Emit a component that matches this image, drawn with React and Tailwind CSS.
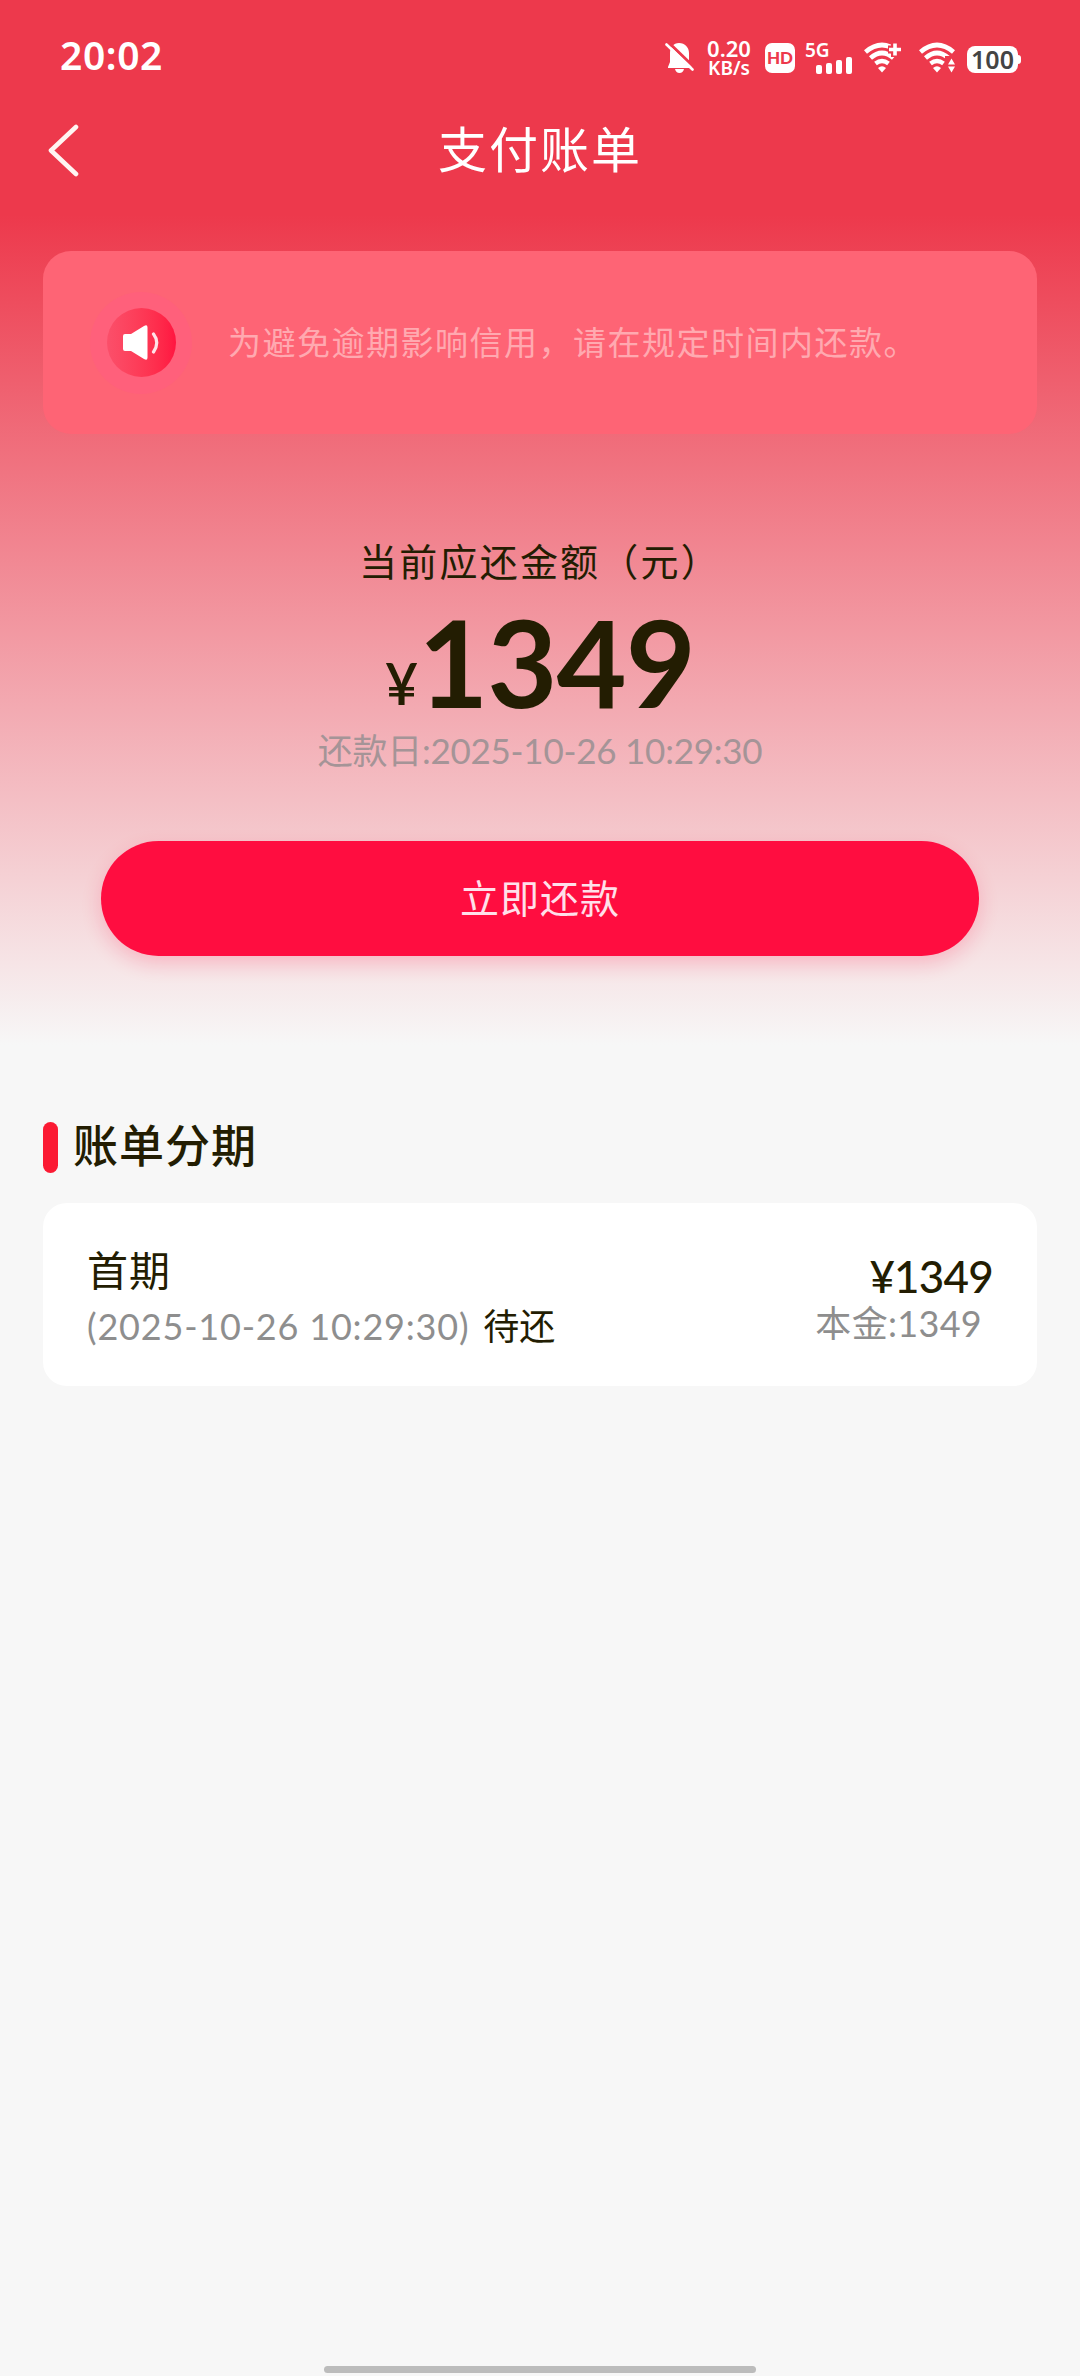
const bill = {
  total: "1349",
  dueAt: "2025-10-26 10:29:30",
  periods: [
    { id: 1, name: "首期", dueAt: "2025-10-26 10:29:30", status: "待还", amount: "1349", principal: "1349" },
  ],
};

export default function App() {
  return (
    <div className="flex h-[2376px] w-[1080px] flex-col overflow-hidden bg-[#f7f7f7] bg-[linear-gradient(180deg,#ed394c_0px,#ed394c_215px,#f7f7f7_1045px)] font-[Lato,'Noto_Sans_CJK_SC',sans-serif] text-[#231d02]">
      <StatusBar />
      <NavBar title="支付账单" />
      <Notice text="为避免逾期影响信用，请在规定时间内还款。" />

      <section className="mt-[98px] flex flex-col items-center">
        <div className="h-[64px] text-[38px] leading-[58px] tracking-[2.2px] whitespace-nowrap">
          当前应还金额（元）
        </div>
        <div className="flex h-[127px] items-baseline leading-[132px]">
          <span className="relative -top-[3px] text-[57px] font-semibold">¥</span>
          <span className="text-[121px] font-bold tracking-[-1px]">{bill.total}</span>
        </div>
        <div className="h-[55px] text-[35px] leading-[54px] tracking-[-0.25px] whitespace-nowrap text-[#a59497]">
          还款日:{bill.dueAt}
        </div>
        <button className="mt-[63px] h-[115px] w-[878px] rounded-full bg-[#ff0d40] text-[39px] tracking-[1px] text-[#ffe0ea] shadow-[0_8px_20px_rgba(255,13,64,0.2)]">
          立即还款
        </button>
      </section>

      <section className="mt-[165px] px-[43px]">
        <div className="flex h-[52px] items-center">
          <span className="h-[51px] w-[15px] rounded-full bg-[#fb1a33]" />
          <h2 className="ml-[15px] text-[45px] font-medium tracking-[1px]">账单分期</h2>
        </div>
        <div className="mt-[30px]">
          {bill.periods.map((p) => (
            <PeriodCard key={p.id} period={p} />
          ))}
        </div>
      </section>

      <div className="mt-auto mb-[3px] h-[7px] w-[432px] self-center rounded-full bg-[#bcbcbc]" />
    </div>
  );
}

function StatusBar() {
  return (
    <div className="flex h-[100px] items-center pt-[15px] pr-[59px] pl-[60px] text-white">
      <span className="-mt-[4px] font-['Noto_Sans'] text-[39px] font-semibold tracking-[0.6px]">20:02</span>
      <div className="ml-auto flex h-[36px] items-center">
        <BellOffIcon />
        <p className="ml-[9px] w-[50px] text-center font-['Noto_Sans'] text-[19px] leading-[18px] font-semibold">
          <span className="text-[22px] leading-[18px]">0.20</span>
          <br />
          KB/s
        </p>
        <span className="ml-[11px] flex h-[30px] w-[30px] items-center justify-center rounded-[7px] bg-white text-[17px] font-black text-[#ed394c]">
          HD
        </span>
        <SignalIcon />
        <WifiIcon className="ml-[12px]" badge="plus" />
        <WifiIcon className="ml-[17px]" badge="traffic" />
        <div className="mt-[3px] ml-[10px] flex items-center">
          <span className="flex h-[27px] w-[51px] items-center justify-center rounded-[8px] bg-white font-['Noto_Sans'] text-[25px] leading-[27px] font-semibold text-[#444]">
            100
          </span>
          <span className="h-[9px] w-[3px] rounded-r-[3px] bg-white" />
        </div>
      </div>
    </div>
  );
}

function NavBar({ title }) {
  return (
    <div className="grid h-[100px] grid-cols-[1fr_auto_1fr] items-center pl-[47px] text-white">
      <svg width="34" height="54" viewBox="0 0 34 54" fill="none" stroke="#fff5f2" strokeWidth="4.6" strokeLinecap="round" strokeLinejoin="round">
        <path d="M29 4 4 27.500 29 51" />
      </svg>
      <h1 className="mr-[47px] text-[49px] tracking-[2px]">{title}</h1>
    </div>
  );
}

function Notice({ text }) {
  return (
    <div className="mx-[43px] mt-[51px] flex h-[183px] items-center rounded-[28px] bg-[#fe6475] pl-[47px]">
      <div className="flex h-[102px] w-[102px] items-center justify-center rounded-full bg-[#ff607b]">
        <div className="flex h-[69px] w-[69px] items-center justify-center rounded-full bg-linear-to-r from-[#fb4f6a] to-[#ff1440]">
          <svg width="38" height="38" viewBox="0 0 38 38">
            <path d="M1 12Q1 10 3 10H9L22 2Q25.500 0 25.500 3.500V33.500Q25.500 37 22 35L9 27H3Q1 27 1 25Z" fill="#fff" />
            <path d="M31.500 10Q38 18.500 31.500 28" fill="none" stroke="#ffe3e8" strokeWidth="3.200" strokeLinecap="round" />
          </svg>
        </div>
      </div>
      <p className="ml-[36px] text-[33px] tracking-[1.500px] whitespace-nowrap text-[#ffa9b0]">{text}</p>
    </div>
  );
}

function PeriodCard({ period }) {
  return (
    <div className="flex h-[183px] justify-between rounded-[24px] bg-white pt-[38px] pr-[44px] pl-[44px] whitespace-nowrap">
      <div>
        <div className="h-[58px] text-[41px] leading-[60px] tracking-[1px]">{period.name}</div>
        <div className="h-[54px] text-[36px] leading-[54px]">
          <span className="tracking-[0.8px] text-[#8e8e8e]">({period.dueAt})</span>
          <span className="ml-[14px]">{period.status}</span>
        </div>
      </div>
      <div className="flex flex-col items-end">
        <div className="h-[58px] text-[44px] leading-[70px] font-medium tracking-[-0.8px]">¥{period.amount}</div>
        <div className="mr-[11px] h-[54px] text-[36px] leading-[48px] tracking-[0.3px] text-[#8e8e8e]">
          本金:{period.principal}
        </div>
      </div>
    </div>
  );
}

function BellOffIcon() {
  return (
    <svg width="30" height="32" viewBox="0 0 30 32">
      <path d="M14 1C20 1 24 5.500 24 11V20L27 25V26H3V25L5 20V11C5 5.500 8.500 1 14 1Z" fill="#fff" />
      <path d="M10 27H19Q18 31 14.500 31T10 27Z" fill="#fff" />
      <path d="M3 0 30 26" stroke="#ed394c" strokeWidth="3" />
      <path d="M1.500 2.500 27.500 27.500" stroke="#fff" strokeWidth="2.600" strokeLinecap="round" />
    </svg>
  );
}

function SignalIcon() {
  return (
    <div className="ml-[10px] flex h-[32px] w-[47px] flex-col">
      <span className="h-[15px] font-['Noto_Sans'] text-[19px] leading-[17px] font-semibold">5G</span>
      <div className="flex flex-1 items-end gap-[4px] pl-[11px]">
        <span className="h-[9px] w-[6px] rounded-[2px] bg-white" />
        <span className="h-[11px] w-[6px] rounded-[2px] bg-white" />
        <span className="h-[14px] w-[6px] rounded-[2px] bg-white" />
        <span className="h-[17px] w-[6px] rounded-[2px] bg-white" />
      </div>
    </div>
  );
}

function WifiIcon({ badge, className }) {
  return (
    <svg className={className} width="38" height="32" viewBox="0 0 38 32" fill="none" stroke="#fff">
      <path d="M1.500 10Q18 -4 34.500 10" strokeWidth="4.600" />
      <path d="M6.500 16Q18 6 29.500 16" strokeWidth="4.600" />
      <path d="M11.500 21.500Q18 16.500 24.500 21.500" strokeWidth="4.400" />
      <path d="M14 26Q18 22.500 22 26L18 30.500Z" fill="#fff" stroke="none" />
      {badge === "plus" ? (
        <>
          <path d="M31 0V15M24 7.500H38" stroke="#ed394c" strokeWidth="8" />
          <path d="M31 1.500V13.500M25 7.500H37" strokeWidth="3.600" />
        </>
      ) : (
        <>
          <path d="M26 14H38V32H26Z" fill="#ed394c" stroke="none" />
          <path d="M32.500 16.500 36 22.500H29ZM29 24.500H36L32.500 30.500Z" fill="#fff" stroke="none" />
        </>
      )}
    </svg>
  );
}
